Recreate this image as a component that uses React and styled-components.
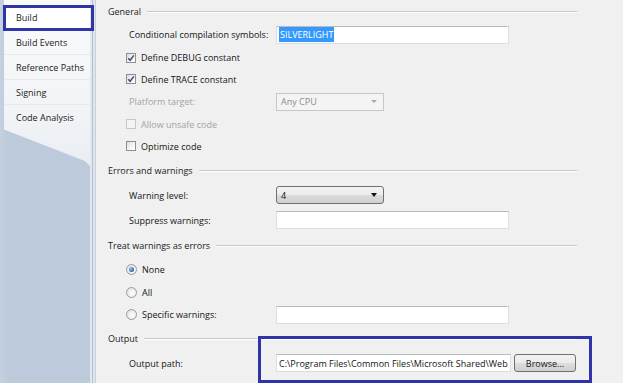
import React from "react";
import styled, { createGlobalStyle } from "styled-components";

const Global = createGlobalStyle`
  html, body { margin: 0; padding: 0; background: #f0f0f0; overflow: hidden; }
  body { font-family: "Open Sans", "Noto Sans", sans-serif; font-size: 9px; color: #141414; }
  * { box-sizing: border-box; }
`;

const Page = styled.div`
  position: relative;
  width: 623px;
  height: 383px;
  display: flex;
  overflow: hidden;
  background: #f0f0f0;
`;

const Sidebar = styled.div`
  width: 90px;
  flex-shrink: 0;
  background: linear-gradient(to right, #c6d1df, #bccadb 8px);
  padding-left: 4px;
`;

const TabPanel = styled.div`
  height: 166px;
  padding-top: 5px;
  background: linear-gradient(to bottom, #fbfbfc, #f1f3f6 70%, #e9edf2);
  clip-path: polygon(0 0, 100% 0, 100% 100%, 94% 97%, 0 78%);
`;

const Tab = styled.div`
  height: 25px;
  display: flex;
  align-items: center;
  padding-left: 12px;
  color: #1a1a1a;
  border-bottom: 1px solid ${(p) => (p.$last ? "transparent" : "#e6e9ee")};
  background: ${(p) => (p.$active ? "#ffffff" : "transparent")};
`;

const Edge = styled.div`
  width: 6px;
  flex-shrink: 0;
  background: linear-gradient(
    to right,
    #e3e8ee 0 2px,
    #b3bfce 2px 3px,
    #dfe5ec 3px 5px,
    #c9d1db 5px 6px
  );
`;

const Content = styled.div`
  flex: 1;
  display: flex;
  flex-direction: column;
  padding: 0 46px 0 12px;
`;

const SectionHeader = styled.div`
  height: ${(p) => p.$h}px;
  display: flex;
  align-items: center;
  gap: 6px;
  color: #1a1a1a;
  &::after {
    content: "";
    flex: 1;
    height: 1px;
    background: #c9c9c9;
    box-shadow: 0 1px 0 #ffffff;
  }
`;

const FieldRow = styled.div`
  height: ${(p) => p.$h}px;
  display: grid;
  grid-template-columns: 147px auto;
  align-items: center;
  padding-left: 21px;
  color: ${(p) => (p.$disabled ? "#a3a3a3" : "#141414")};
`;

const CheckRow = styled.label`
  height: ${(p) => p.$h}px;
  display: flex;
  align-items: center;
  gap: 5px;
  padding-left: ${(p) => (p.$inline ? 0 : 18)}px;
  margin-left: ${(p) => (p.$inline ? -3 : 0)}px;
  color: ${(p) => (p.$disabled ? "#a3a3a3" : "#141414")};
`;

const Box = styled.span`
  width: 10px;
  height: 10px;
  border: 1px solid ${(p) => (p.$disabled ? "#c6c6c6" : "#8e8f8f")};
  background: ${(p) =>
    p.$disabled
      ? "#f4f4f4"
      : "linear-gradient(135deg, #dcdcdc, #f7f7f7 60%, #ffffff)"};
  display: flex;
  align-items: center;
  justify-content: center;
`;

const Radio = styled.span`
  width: 11px;
  height: 11px;
  border-radius: 50%;
  border: 1px solid #9a9b9c;
  background: radial-gradient(circle at 60% 60%, #ffffff, #dadada);
  display: flex;
  align-items: center;
  justify-content: center;
  &::after {
    content: "";
    display: ${(p) => (p.$checked ? "block" : "none")};
    width: 5px;
    height: 5px;
    border-radius: 50%;
    background: radial-gradient(circle at 35% 35%, #9cc8f2, #2a62a8 70%);
  }
`;

const TextInput = styled.div`
  width: ${(p) => p.$w || 233}px;
  height: 18px;
  background: #ffffff;
  border: 1px solid #dcdee3;
  border-top-color: #b7bac0;
  display: flex;
  align-items: center;
  padding-left: 2px;
  overflow: hidden;
  color: #141414;
`;

const InputText = styled.span`
  display: block;
  flex: 1;
  min-width: 0;
  overflow: hidden;
  white-space: nowrap;
  text-overflow: clip;
`;

const Selected = styled.span`
  background: #3399ff;
  color: #ffffff;
  padding: 1px 1px;
`;

const Combo = styled.div`
  width: 108px;
  height: 18px;
  display: flex;
  align-items: center;
  justify-content: space-between;
  padding: 0 6px 0 4px;
  border-radius: ${(p) => (p.$disabled ? 0 : 3)}px;
  border: 1px solid ${(p) => (p.$disabled ? "#c5c7ca" : "#707070")};
  background: ${(p) =>
    p.$disabled
      ? "#f4f4f4"
      : "linear-gradient(to bottom, #f4f4f4, #ebebeb 50%, #dcdcdc 50%, #cfcfcf)"};
  color: ${(p) => (p.$disabled ? "#8a8a8a" : "#111")};
`;

const Arrow = styled.span`
  width: 0;
  height: 0;
  border-left: ${(p) => (p.$disabled ? 3 : 3.5)}px solid transparent;
  border-right: ${(p) => (p.$disabled ? 3 : 3.5)}px solid transparent;
  border-top: ${(p) => (p.$disabled ? 3 : 4)}px solid ${(p) => (p.$disabled ? "#a8a8a8" : "#111")};
`;

const PathGroup = styled.div`
  display: flex;
  align-items: center;
  gap: 3px;
`;

const Button = styled.div`
  width: 62px;
  height: 18px;
  border: 1px solid #707070;
  border-radius: 3px;
  background: linear-gradient(to bottom, #f2f2f2, #ebebeb 50%, #dddddd 50%, #cfcfcf);
  display: flex;
  align-items: center;
  justify-content: center;
  color: #141414;
`;

const Callout = styled.div`
  position: absolute;
  left: ${(p) => p.$x}px;
  top: ${(p) => p.$y}px;
  width: ${(p) => p.$w}px;
  height: ${(p) => p.$h}px;
  border: 3px solid #2f34a8;
  pointer-events: none;
`;

const Check = () => (
  <svg width="8" height="8" viewBox="0 0 8 8">
    <path d="M1.2 4.2 L3.1 6.3 L6.9 1.4" fill="none" stroke="#3b4a78" strokeWidth="1.5" />
  </svg>
);

const tabs = ["Build", "Build Events", "Reference Paths", "Signing", "Code Analysis"];

export default function App() {
  return (
    <Page>
      <Global />
      <Sidebar>
        <TabPanel>
          {tabs.map((t, i) => (
            <Tab key={t} $active={i === 0} $last={i === tabs.length - 1}>
              {t}
            </Tab>
          ))}
        </TabPanel>
      </Sidebar>
      <Edge />
      <Content>
        <SectionHeader $h={22}>General</SectionHeader>
        <FieldRow $h={25}>
          <span>Conditional compilation symbols:</span>
          <TextInput>
            <Selected>SILVERLIGHT</Selected>
          </TextInput>
        </FieldRow>
        <CheckRow $h={21}>
          <Box><Check /></Box>
          Define DEBUG constant
        </CheckRow>
        <CheckRow $h={22}>
          <Box><Check /></Box>
          Define TRACE constant
        </CheckRow>
        <FieldRow $h={23} $disabled>
          <span>Platform target:</span>
          <Combo $disabled>
            Any CPU
            <Arrow $disabled />
          </Combo>
        </FieldRow>
        <CheckRow $h={22} $disabled>
          <Box $disabled />
          Allow unsafe code
        </CheckRow>
        <CheckRow $h={22}>
          <Box />
          Optimize code
        </CheckRow>

        <SectionHeader $h={26}>Errors and warnings</SectionHeader>
        <FieldRow $h={24}>
          <span>Warning level:</span>
          <Combo>
            4
            <Arrow />
          </Combo>
        </FieldRow>
        <FieldRow $h={26}>
          <span>Suppress warnings:</span>
          <TextInput />
        </FieldRow>

        <SectionHeader $h={25}>Treat warnings as errors</SectionHeader>
        <CheckRow $h={23}>
          <Radio $checked />
          None
        </CheckRow>
        <CheckRow $h={22}>
          <Radio />
          All
        </CheckRow>
        <FieldRow $h={23}>
          <CheckRow as="span" $h={23} $inline>
            <Radio />
            Specific warnings:
          </CheckRow>
          <TextInput />
        </FieldRow>

        <SectionHeader $h={24}>Output</SectionHeader>
        <FieldRow $h={26}>
          <span>Output path:</span>
          <PathGroup>
            <TextInput $w={235}>
              <InputText>C:\Program Files\Common Files\Microsoft Shared\Web Server Extensions</InputText>
            </TextInput>
            <Button>Browse...</Button>
          </PathGroup>
        </FieldRow>
      </Content>

      <Callout $x={3} $y={5} $w={91} $h={26} />
      <Callout $x={258} $y={336} $w={334} $h={47} />
    </Page>
  );
}
